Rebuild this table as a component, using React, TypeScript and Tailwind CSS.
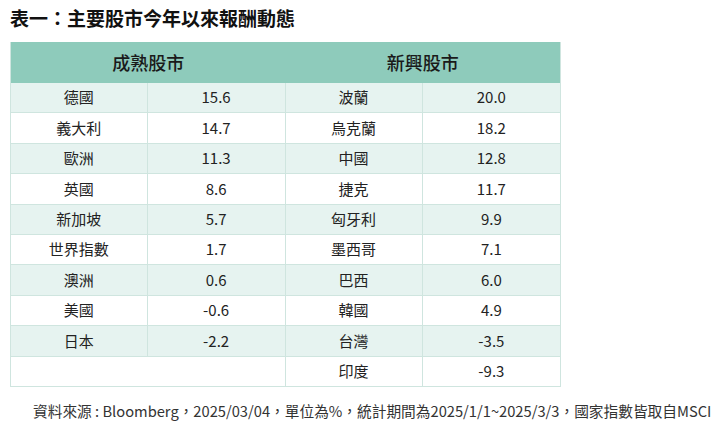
const developed: [string, string][] = [
  ["德國", "15.6"],
  ["義大利", "14.7"],
  ["歐洲", "11.3"],
  ["英國", "8.6"],
  ["新加坡", "5.7"],
  ["世界指數", "1.7"],
  ["澳洲", "0.6"],
  ["美國", "-0.6"],
  ["日本", "-2.2"],
];

const emerging: [string, string][] = [
  ["波蘭", "20.0"],
  ["烏克蘭", "18.2"],
  ["中國", "12.8"],
  ["捷克", "11.7"],
  ["匈牙利", "9.9"],
  ["墨西哥", "7.1"],
  ["巴西", "6.0"],
  ["韓國", "4.9"],
  ["台灣", "-3.5"],
  ["印度", "-9.3"],
];

function Cell({ children, last }: { children?: React.ReactNode; last?: boolean }) {
  return (
    <div
      className={
        "flex items-center justify-center h-[30.4px] border-b border-[#cfe5df] " +
        (last ? "" : "border-r")
      }
    >
      {children}
    </div>
  );
}

export default function App() {
  return (
    <div className="w-[725px] h-[436px] bg-white text-[#222] font-['Noto_Sans_CJK_TC','Noto_Sans',sans-serif] pt-[6px]">
      <h1 className="pl-[10px] text-[19px] leading-[24px] font-semibold text-[#111]">
        表一：主要股市今年以來報酬動態
      </h1>
      <div className="ml-[10px] mt-[12px] w-[551px] border-l border-r border-[#cfe5df]">
        <div className="grid grid-cols-2 h-[41px] bg-[#8ecbbb] text-[18px] font-medium text-[#1a1a1a]">
          <div className="flex items-center justify-center">成熟股市</div>
          <div className="flex items-center justify-center">新興股市</div>
        </div>
        <div className="grid grid-cols-2">
          <div className="border-r border-[#cfe5df]">
            {developed.map(([name, val], i) => (
              <div key={name} className={"grid grid-cols-2 " + (i % 2 === 0 ? "bg-[#e6f3f0]" : "bg-white")}>
                <Cell>
                  <span className="text-[15px]">{name}</span>
                </Cell>
                <Cell last>
                  <span className="text-[15px]">{val}</span>
                </Cell>
              </div>
            ))}
            <div className="h-[30.4px] border-b border-[#cfe5df]" />
          </div>
          <div>
            {emerging.map(([name, val], i) => (
              <div key={name} className={"grid grid-cols-2 " + (i % 2 === 0 ? "bg-[#e6f3f0]" : "bg-white")}>
                <Cell>
                  <span className="text-[15px]">{name}</span>
                </Cell>
                <Cell last>
                  <span className="text-[15px]">{val}</span>
                </Cell>
              </div>
            ))}
          </div>
        </div>
      </div>
      <p className="mt-[15px] pl-[33px] text-[14.7px] leading-[18px] text-[#333] whitespace-nowrap">
        資料來源 : Bloomberg，2025/03/04，單位為%，統計期間為2025/1/1~2025/3/3，國家指數皆取自MSCI
      </p>
    </div>
  );
}
